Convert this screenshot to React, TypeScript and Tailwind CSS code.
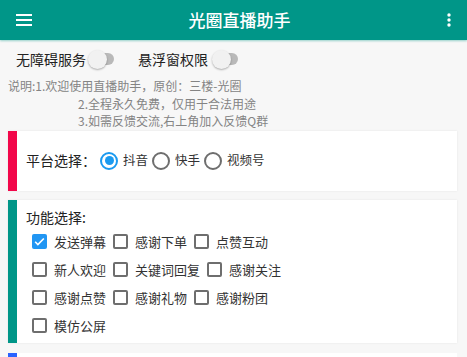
import React from "react";

const font = { fontFamily: '"Noto Sans CJK SC", "Noto Sans", sans-serif' };

function Toggle() {
  return (
    <div className="relative w-[26px] h-[20px] flex items-center">
      <div className="absolute left-[7px] w-[19px] h-[12px] rounded-full bg-[#b9b9b9]" />
      <div className="absolute left-0 w-[19px] h-[19px] rounded-full bg-[#f1f1f1] shadow-[0_1px_2px_rgba(0,0,0,0.3)]" />
    </div>
  );
}

function Radio({ on, label }: { on?: boolean; label: string }) {
  return (
    <div className="flex items-center gap-[5px]">
      <div
        className={
          "w-[18px] h-[18px] rounded-full border-2 flex items-center justify-center " +
          (on ? "border-[#1a9af0]" : "border-[#6e6e6e]")
        }
      >
        {on && <div className="w-[9px] h-[9px] rounded-full bg-[#1a9af0]" />}
      </div>
      <span className="text-[12.5px] text-[#333]">{label}</span>
    </div>
  );
}

function Check({ on, label }: { on?: boolean; label: string }) {
  return (
    <div className="flex items-center gap-[7px]">
      {on ? (
        <div className="w-[15px] h-[15px] rounded-[2px] bg-[#2196f3] flex items-center justify-center">
          <svg width="13" height="13" viewBox="0 0 24 24">
            <path d="M4 12.5l5 5L20 6.5" fill="none" stroke="white" strokeWidth="3" />
          </svg>
        </div>
      ) : (
        <div className="w-[15px] h-[15px] rounded-[2px] border-2 border-[#6e6e6e]" />
      )}
      <span className="text-[13px] text-[#333]">{label}</span>
    </div>
  );
}

export default function App() {
  return (
    <div className="w-[467px] h-[357px] overflow-hidden bg-[#f7f7f7]" style={font}>
      <div className="h-[40px] bg-[#009688] flex items-center justify-between px-[16px] shadow-[0_1px_2px_rgba(0,150,136,0.4)] relative z-10">
        <svg width="16" height="12" viewBox="0 0 16 12">
          <rect x="0" y="0" width="16" height="2" fill="white" />
          <rect x="0" y="5" width="16" height="2" fill="white" />
          <rect x="0" y="10" width="16" height="2" fill="white" />
        </svg>
        <span className="text-white text-[17px] font-medium">光圈直播助手</span>
        <svg width="4" height="14" viewBox="0 0 4 14">
          <circle cx="2" cy="2" r="1.7" fill="white" />
          <circle cx="2" cy="7" r="1.7" fill="white" />
          <circle cx="2" cy="12" r="1.7" fill="white" />
        </svg>
      </div>
      <div className="flex items-center pl-[16px] pt-[4px] h-[34px]">
        <span className="text-[14px] text-[#222]">无障碍服务</span>
        <div className="ml-[2px]"><Toggle /></div>
        <span className="text-[14px] text-[#222] ml-[24px]">悬浮窗权限</span>
        <div className="ml-[4px]"><Toggle /></div>
      </div>
      <div className="text-[12px] text-[#848484] leading-[17.5px] pl-[8px] pt-[3px]">
        <div>说明:1.欢迎使用直播助手，原创：三楼-光圈</div>
        <div className="pl-[70px]">2.全程永久免费，仅用于合法用途</div>
        <div className="pl-[70px]">3.如需反馈交流,右上角加入反馈Q群</div>
      </div>
      <div className="ml-[8px] mr-[10px] mt-[1px] h-[60px] bg-white flex shadow-[0_0_2px_rgba(0,0,0,0.08)]">
        <div className="w-[9px] bg-[#f2074a]" />
        <div className="flex items-center pl-[9px] gap-[4px]">
          <span className="text-[14px] text-[#222]">平台选择：</span>
          <Radio on label="抖音" />
          <Radio label="快手" />
          <Radio label="视频号" />
        </div>
      </div>
      <div className="ml-[8px] mr-[10px] mt-[9px] h-[143px] bg-white flex shadow-[0_0_2px_rgba(0,0,0,0.08)]">
        <div className="w-[9px] bg-[#009688]" />
        <div className="pl-[9px] pt-[6px]">
          <div className="text-[14px] text-[#222] leading-[22px]">功能选择:</div>
          <div className="pl-[6px] flex flex-col">
            <div className="flex gap-[7px] h-[28px] items-center"><Check on label="发送弹幕" /><Check label="感谢下单" /><Check label="点赞互动" /></div>
            <div className="flex gap-[7px] h-[28px] items-center"><Check label="新人欢迎" /><Check label="关键词回复" /><Check label="感谢关注" /></div>
            <div className="flex gap-[7px] h-[28px] items-center"><Check label="感谢点赞" /><Check label="感谢礼物" /><Check label="感谢粉团" /></div>
            <div className="flex gap-[7px] h-[28px] items-center"><Check label="模仿公屏" /></div>
          </div>
        </div>
      </div>
      <div className="ml-[8px] mr-[10px] mt-[10px] h-[60px] bg-white flex">
        <div className="w-[9px] bg-[#2962ff]" />
      </div>
    </div>
  );
}
